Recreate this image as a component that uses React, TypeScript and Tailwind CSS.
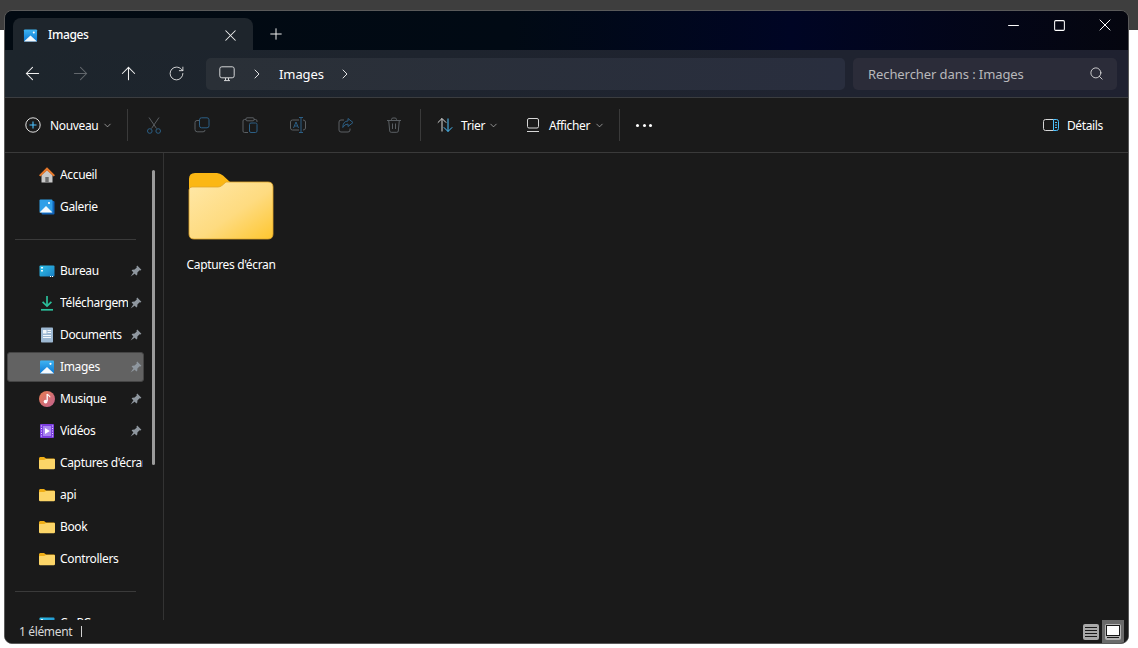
import {
  ArrowLeft,
  ArrowRight,
  ArrowUp,
  ChevronDown,
  ChevronRight,
  Minus,
  Plus,
  RotateCw,
  Search,
  Square,
  X,
} from "lucide-react";

function ImagesIcon({ size = 16 }: { size?: number }) {
  return (
    <svg width={size} height={size} viewBox="0 0 16 16">
      <defs>
        <linearGradient id="imgSky" x1="0" y1="0" x2="0" y2="1">
          <stop offset="0" stopColor="#3fb4f2" />
          <stop offset="1" stopColor="#0a78d4" />
        </linearGradient>
      </defs>
      <rect x="1" y="1.5" width="14" height="13" rx="1" fill="url(#imgSky)" />
      <path d="M1 14.5 L8 8 L15 14.5 Z" fill="#f4f9fd" />
      <circle cx="11.5" cy="4.8" r="1.1" fill="#fff" />
    </svg>
  );
}

function GalleryIcon() {
  return (
    <svg width="16" height="16" viewBox="0 0 16 16">
      <rect x="2.5" y="2" width="13" height="13.5" rx="1" fill="#0f62b8" />
      <rect x="0.5" y="0.5" width="13" height="13" rx="1" fill="#2f9fe8" />
      <path d="M0.5 13.5 L7 7 L13.5 13.5 Z" fill="#f4f9fd" />
      <circle cx="10" cy="4" r="1.1" fill="#fff" />
    </svg>
  );
}

function HomeIcon() {
  return (
    <svg width="16" height="16" viewBox="0 0 16 16">
      <path d="M2.5 8 L8 3 L13.5 8 V15.5 H2.5 Z" fill="#c9c9c9" />
      <rect x="6.3" y="10" width="3.4" height="5.5" fill="#6d6d6d" />
      <path d="M0 8.2 L8 0.3 L16 8.2 L14.6 9.6 L8 3.6 L1.4 9.6 Z" fill="#e8792b" />
    </svg>
  );
}

function DesktopIcon() {
  return (
    <svg width="16" height="16" viewBox="0 0 16 16">
      <defs>
        <linearGradient id="deskFill" x1="0" y1="0" x2="1" y2="1">
          <stop offset="0" stopColor="#2fc0e8" />
          <stop offset="1" stopColor="#1a7fc4" />
        </linearGradient>
      </defs>
      <rect x="0.5" y="2.5" width="15" height="11" rx="1" fill="url(#deskFill)" />
      <rect x="2" y="4" width="2" height="1.5" fill="#e9f8fd" />
      <rect x="2" y="7" width="2" height="1.5" fill="#e9f8fd" />
      <rect x="11" y="13" width="1" height="1" fill="#fff" />
      <rect x="13" y="13" width="1" height="1" fill="#fff" />
    </svg>
  );
}

function DownloadIcon() {
  return (
    <svg width="16" height="16" viewBox="0 0 16 16" fill="none" stroke="#2bbf9b" strokeWidth="1.7">
      <path d="M8 1 V10.5" />
      <path d="M3.6 6.8 L8 11 L12.4 6.8" />
      <path d="M2 14.8 H14" />
    </svg>
  );
}

function DocIcon() {
  return (
    <svg width="16" height="16" viewBox="0 0 16 16">
      <rect x="2" y="0.5" width="12" height="15" rx="0.8" fill="#9db8d2" />
      <rect x="4" y="3" width="3.5" height="3.5" fill="#f3f7fb" />
      <path d="M8.5 3.5 H12 M8.5 5.5 H12 M4 8.5 H12 M4 10.5 H12" stroke="#f3f7fb" strokeWidth="1" />
    </svg>
  );
}

function MusicIcon() {
  return (
    <svg width="16" height="16" viewBox="0 0 16 16">
      <defs>
        <linearGradient id="musicFill" x1="0" y1="0" x2="1" y2="1">
          <stop offset="0" stopColor="#ea7f52" />
          <stop offset="1" stopColor="#c0608e" />
        </linearGradient>
      </defs>
      <circle cx="8" cy="8" r="8" fill="url(#musicFill)" />
      <path d="M8.2 3 V10" stroke="#fff" strokeWidth="1.3" />
      <path d="M8.2 3 C9 4.5 10.8 4.5 11 6.2" stroke="#fff" strokeWidth="1.1" fill="none" />
      <circle cx="6.6" cy="10.6" r="1.9" fill="#fff" />
    </svg>
  );
}

function VideoIcon() {
  return (
    <svg width="16" height="16" viewBox="0 0 16 16">
      <rect x="1" y="1" width="14" height="14" rx="1" fill="#7d3fe0" />
      <rect x="4" y="3" width="8" height="10" fill="#a884f0" />
      <path d="M6 5 L10.8 8 L6 11 Z" fill="#fff" />
      <path d="M2 3 H3 M2 5.5 H3 M2 8 H3 M2 10.5 H3 M2 13 H3 M13 3 H14 M13 5.5 H14 M13 8 H14 M13 10.5 H14 M13 13 H14" stroke="#e6dcfb" strokeWidth="1" />
    </svg>
  );
}

function SmallFolder() {
  return (
    <svg width="16" height="16" viewBox="0 0 16 16">
      <path d="M0 3.5 Q0 2 1.2 2 H5 L7 3.6 H14.8 Q16 3.6 16 5 V8 H0 Z" fill="#f0ae15" />
      <path d="M0 5.6 Q0 5 0.8 5 H5.2 L7 3.9 H15 Q16 3.9 16 5 V13 Q16 14.2 14.8 14.2 H1.2 Q0 14.2 0 13 Z" fill="#fcd568" />
    </svg>
  );
}

function BigFolder() {
  return (
    <svg width="86" height="68" viewBox="0 0 86 68">
      <defs>
        <linearGradient id="bigFolderFill" x1="0" y1="0" x2="1" y2="1">
          <stop offset="0" stopColor="#ffe8a8" />
          <stop offset="0.55" stopColor="#fedb80" />
          <stop offset="1" stopColor="#fec62f" />
        </linearGradient>
      </defs>
      <path d="M1 7 Q1 1 7 1 H29 Q32 1 35 3.5 L42 10 H40 V24 H1 Z" fill="#fbb714" />
      <path d="M1 18 Q1 15 4 15 H30 Q32 15 34 13.5 L38 10 H80 Q85 10 85 15 V62 Q85 67 80 67 H6 Q1 67 1 62 Z" fill="url(#bigFolderFill)" stroke="#e0a52a" strokeWidth="0.8" />
    </svg>
  );
}

function PinIcon() {
  return (
    <svg width="12" height="12" viewBox="0 0 12 12" fill="#8f979f">
      <path d="M7.2 0.6 L11.4 4.8 L10.4 5.5 L9.6 5.2 L7.4 7.4 L7.3 9.6 L6.4 10.4 L1.6 5.6 L2.4 4.7 L4.6 4.6 L6.8 2.4 L6.5 1.6 Z" />
      <path d="M3.6 7 L0.6 11.4 L5 8.4 Z" />
    </svg>
  );
}

function NewIcon() {
  return (
    <svg width="16" height="16" viewBox="0 0 16 16" fill="none">
      <circle cx="8" cy="8" r="7.2" stroke="#e0e0e0" strokeWidth="1" />
      <path d="M8 4.5 V11.5 M4.5 8 H11.5" stroke="#4cc2ff" strokeWidth="1.1" />
    </svg>
  );
}

function CutIcon() {
  return (
    <svg width="16" height="17" viewBox="0 0 16 17" fill="none" strokeWidth="1">
      <path d="M3 0.5 L10.5 11.5 M13 0.5 L5.5 11.5" stroke="#5a5f63" />
      <circle cx="3.8" cy="14" r="2.3" stroke="#2c5f85" />
      <circle cx="12.2" cy="14" r="2.3" stroke="#2c5f85" />
    </svg>
  );
}

function CopyIcon() {
  return (
    <svg width="16" height="16" viewBox="0 0 16 16" fill="none" strokeWidth="1">
      <rect x="5.5" y="0.8" width="9.5" height="10" rx="2" stroke="#2c5f85" />
      <path d="M5 3.5 H3 Q1 3.5 1 5.5 V12.5 Q1 14.8 3.2 14.8 H9 Q11 14.8 11 13" stroke="#5a5f63" />
    </svg>
  );
}

function PasteIcon() {
  return (
    <svg width="16" height="16" viewBox="0 0 16 16" fill="none" strokeWidth="1">
      <path d="M4 2.5 H2.5 Q1 2.5 1 4 V14 Q1 15.5 2.5 15.5 H6 M12 2.5 H13.5 Q15 2.5 15 4 V5" stroke="#5a5f63" />
      <rect x="4" y="0.8" width="8" height="3" rx="1" stroke="#5a5f63" />
      <rect x="7.5" y="6" width="7.5" height="9.5" rx="1.5" stroke="#2c5f85" />
    </svg>
  );
}

function RenameIcon() {
  return (
    <svg width="16" height="16" viewBox="0 0 16 16" fill="none" strokeWidth="1">
      <path d="M9 3 H2.5 Q0.5 3 0.5 5 V11 Q0.5 13 2.5 13 H9 M13 3 Q15.5 3 15.5 5 V11 Q15.5 13 13 13" stroke="#5a5f63" />
      <path d="M3.5 11 L6 5 L8.5 11 M4.4 9 H7.6" stroke="#2c5f85" />
      <path d="M9 0.5 H13 M11 0.5 V15.5 M9 15.5 H13" stroke="#2c5f85" />
    </svg>
  );
}

function ShareIcon() {
  return (
    <svg width="16" height="16" viewBox="0 0 16 16" fill="none" strokeWidth="1">
      <path d="M6 3 H3 Q1 3 1 5 V13 Q1 15 3 15 H10 Q12 15 12 13 V11.5" stroke="#5a5f63" />
      <path d="M10 1.5 L15 5.5 L10 9.5 V7 Q6.5 7 4.8 10.5 Q5 4 10 4 Z" stroke="#2c5f85" />
    </svg>
  );
}

function TrashIcon() {
  return (
    <svg width="16" height="16" viewBox="0 0 16 16" fill="none" stroke="#5a5f63" strokeWidth="1">
      <path d="M1 3.5 H15 M5.5 3.5 V2.5 Q5.5 1 7 1 H9 Q10.5 1 10.5 2.5 V3.5" />
      <path d="M2.7 3.5 L3.7 14 Q3.8 15.3 5.2 15.3 H10.8 Q12.2 15.3 12.3 14 L13.3 3.5" />
      <path d="M6.5 6.5 V12 M9.5 6.5 V12" />
    </svg>
  );
}

function SortIcon() {
  return (
    <svg width="16" height="16" viewBox="0 0 16 16" fill="none" strokeWidth="1">
      <path d="M5 14.5 V1.5 M0.8 5.7 L5 1.5 L9.2 5.7" stroke="#d6d6d6" />
      <path d="M11 1.5 V14.5 M6.8 10.3 L11 14.5 L15.2 10.3" stroke="#4cc2ff" />
    </svg>
  );
}

function ViewIcon() {
  return (
    <svg width="16" height="16" viewBox="0 0 16 16" fill="none" stroke="#d6d6d6" strokeWidth="1">
      <rect x="2.5" y="1.5" width="11" height="9.5" rx="1.5" />
      <path d="M2 14.5 H14" />
    </svg>
  );
}

function DetailsIcon() {
  return (
    <svg width="16" height="16" viewBox="0 0 16 16" fill="none" strokeWidth="1">
      <path d="M10.5 2.5 H2.5 Q0.5 2.5 0.5 4.5 V11.5 Q0.5 13.5 2.5 13.5 H10.5" stroke="#d6d6d6" />
      <path d="M10.5 2.5 H13.5 Q15.5 2.5 15.5 4.5 V11.5 Q15.5 13.5 13.5 13.5 H10.5 Z" stroke="#4cc2ff" />
      <path d="M12 5.5 H14 M12 8 H14 M12 10.5 H14" stroke="#4cc2ff" />
    </svg>
  );
}

function MonitorIcon() {
  return (
    <svg width="16" height="16" viewBox="0 0 16 16" fill="none" stroke="#d4d6d8" strokeWidth="1">
      <rect x="0.8" y="0.8" width="14.4" height="11" rx="2" />
      <path d="M5 14.6 H11 M6.5 12 V14.5 M9.5 12 V14.5" />
    </svg>
  );
}

const topItems = [
  { label: "Accueil", icon: <HomeIcon /> },
  { label: "Galerie", icon: <GalleryIcon /> },
];

const pinned = [
  { label: "Bureau", icon: <DesktopIcon />, pin: true },
  { label: "Téléchargem", icon: <DownloadIcon />, pin: true },
  { label: "Documents", icon: <DocIcon />, pin: true },
  { label: "Images", icon: <ImagesIcon />, pin: true, active: true },
  { label: "Musique", icon: <MusicIcon />, pin: true },
  { label: "Vidéos", icon: <VideoIcon />, pin: true },
  { label: "Captures d'écran", icon: <SmallFolder /> },
  { label: "api", icon: <SmallFolder /> },
  { label: "Book", icon: <SmallFolder /> },
  { label: "Controllers", icon: <SmallFolder /> },
];

function SideRow({ label, icon, pin, active }: { label: string; icon: React.ReactNode; pin?: boolean; active?: boolean }) {
  return (
    <div className="flex h-[32px] items-center">
      <div
        className={`ml-[2px] flex h-[30px] w-[137px] items-center rounded-[3px] border pl-[31px] ${
          active ? "border-[#454545] bg-[#626262]" : "border-transparent"
        }`}
      >
        <span className="shrink-0">{icon}</span>
        <span className="ml-[5px] w-0 grow overflow-hidden whitespace-nowrap text-white">{label}</span>
        {pin && (
          <span className="mr-[1px] ml-[2px] shrink-0">
            <PinIcon />
          </span>
        )}
      </div>
    </div>
  );
}

function ToolSlot({ children }: { children: React.ReactNode }) {
  return <div className="flex w-12 justify-center">{children}</div>;
}

function Divider() {
  return <div className="h-[32px] w-px bg-[#3a3a3a]" />;
}

export default function App() {
  return (
    <div
      className="h-[648px] w-[1138px] overflow-hidden bg-[linear-gradient(#3e3e3e_30px,#ffffff_30px)] pt-[10px] pl-[4px] text-[12px] tracking-[-0.35px] text-white"
      style={{ fontFamily: '"Noto Sans", "Open Sans", sans-serif' }}
    >
      <div className="flex h-[634px] w-[1125px] flex-col overflow-hidden rounded-[8px] border border-[#5a5a5a] bg-[#1a1a1a]">
        {/* title bar */}
        <div className="flex h-[39px] shrink-0 bg-[linear-gradient(90deg,#020a12_0%,#010a14_45%,#000524_70%,#05060f_100%)]">
          <div className="mt-[7px] ml-[8px] flex h-[32px] w-[240px] items-center rounded-t-[8px] bg-[#1e252c] pt-[2px] pl-[10px]">
            <ImagesIcon size={15} />
            <span className="ml-[10px] w-[173px] font-medium">Images</span>
            <X size={19} strokeWidth={1.3} className="text-[#f0f0f0]" />
          </div>
          <div className="mt-[7px] ml-[14px] flex h-[32px] items-center">
            <Plus size={18} strokeWidth={1.3} className="text-[#f4f4f4]" />
          </div>
          <div className="ml-auto flex h-[28px]">
            <div className="flex w-[46px] items-center justify-center">
              <Minus size={17} strokeWidth={1.4} />
            </div>
            <div className="flex w-[46px] items-center justify-center">
              <Square size={13} strokeWidth={1.9} />
            </div>
            <div className="flex w-[46px] items-center justify-center">
              <X size={20} strokeWidth={1.2} />
            </div>
          </div>
        </div>

        {/* nav bar */}
        <div className="flex h-[48px] shrink-0 items-center border-b border-[#3b3d40] bg-[linear-gradient(90deg,#1d252c,#1f2330_75%,#1f2130)] pr-[10px] pl-[3px]">
          <ToolSlot>
            <ArrowLeft size={21} strokeWidth={1.2} className="text-[#f0f0f0]" />
          </ToolSlot>
          <ToolSlot>
            <ArrowRight size={21} strokeWidth={1.2} className="text-[#62676c]" />
          </ToolSlot>
          <ToolSlot>
            <ArrowUp size={21} strokeWidth={1.2} className="text-[#f0f0f0]" />
          </ToolSlot>
          <ToolSlot>
            <RotateCw size={17} strokeWidth={1.2} className="text-[#f0f0f0]" />
          </ToolSlot>
          <div className="ml-[6px] flex h-[32px] w-[639px] items-center rounded-[5px] bg-[linear-gradient(90deg,#2a3037,#292e3e)] pl-[13px] text-[13px] tracking-[-0.08px]">
            <MonitorIcon />
            <ChevronRight size={16} strokeWidth={1.4} className="ml-[14px] text-[#f0f0f0]" />
            <span className="ml-[14px] w-[45px] pt-[2px]">Images</span>
            <ChevronRight size={16} strokeWidth={1.4} className="ml-[13px] text-[#f0f0f0]" />
          </div>
          <div className="ml-[8px] flex h-[32px] w-[264px] items-center justify-between rounded-[5px] bg-[#2b2c39] pr-[13px] pl-[15px] text-[13px] tracking-[-0.08px] text-[#b8b8bb]">
            <span className="pt-[2px]">Rechercher dans : Images</span>
            <Search size={15} strokeWidth={1.4} className="text-[#e0e0e0]" />
          </div>
        </div>

        {/* command bar */}
        <div className="flex h-[55px] shrink-0 items-center border-b border-[#3a3a3a] bg-[#1a1a1a] pr-[25px] pl-[20px]">
          <NewIcon />
          <span className="ml-[9px] w-[48px] pt-[2px] whitespace-nowrap">Nouveau</span>
          <ChevronDown size={11} strokeWidth={1.4} className="ml-[4px] text-[#cfcfcf]" />
          <div className="ml-[14px]">
            <Divider />
          </div>
          <div className="ml-[2px] flex">
            <ToolSlot>
              <CutIcon />
            </ToolSlot>
            <ToolSlot>
              <CopyIcon />
            </ToolSlot>
            <ToolSlot>
              <PasteIcon />
            </ToolSlot>
            <ToolSlot>
              <RenameIcon />
            </ToolSlot>
            <ToolSlot>
              <ShareIcon />
            </ToolSlot>
            <ToolSlot>
              <TrashIcon />
            </ToolSlot>
          </div>
          <div className="ml-[2px]">
            <Divider />
          </div>
          <span className="ml-[16px]">
            <SortIcon />
          </span>
          <span className="ml-[8px] w-[23px] pt-[2px] whitespace-nowrap">Trier</span>
          <ChevronDown size={11} strokeWidth={1.4} className="ml-[4px] text-[#cfcfcf]" />
          <span className="ml-[26px]">
            <ViewIcon />
          </span>
          <span className="ml-[8px] w-[42px] pt-[2px] whitespace-nowrap">Afficher</span>
          <ChevronDown size={11} strokeWidth={1.4} className="ml-[3px] text-[#cfcfcf]" />
          <div className="ml-[14px]">
            <Divider />
          </div>
          <div className="ml-[16px] flex w-[16px] justify-between">
            <span className="h-[3px] w-[3px] rounded-full bg-white" />
            <span className="h-[3px] w-[3px] rounded-full bg-white" />
            <span className="h-[3px] w-[3px] rounded-full bg-white" />
          </div>
          <div className="ml-auto flex items-center">
            <DetailsIcon />
            <span className="ml-[8px] pt-[2px] whitespace-nowrap">Détails</span>
          </div>
        </div>

        {/* body */}
        <div className="flex min-h-0 grow">
          <div className="relative w-[159px] shrink-0 overflow-hidden border-r border-[#333333] pt-[6px]">
            <div className="absolute top-[17px] left-[147px] h-[295px] w-[3px] rounded-full bg-[#9b9b9b]" />
            {topItems.map((item) => (
              <SideRow key={item.label} label={item.label} icon={item.icon} />
            ))}
            <div className="mt-[16px] mb-[15px] ml-[10px] h-px w-[121px] bg-[#3a3a3a]" />
            {pinned.map((item) => (
              <SideRow key={item.label} {...item} />
            ))}
            <div className="mt-[16px] mb-[15px] ml-[10px] h-px w-[121px] bg-[#3a3a3a]" />
            <SideRow label="Ce PC" icon={<DesktopIcon />} />
          </div>
          <div className="grow pt-[19px] pl-[22px]">
            <div className="flex w-[90px] flex-col items-center">
              <BigFolder />
              <span className="mt-[16px] whitespace-nowrap">Captures d'écran</span>
            </div>
          </div>
        </div>

        {/* status bar */}
        <div className="relative flex h-[23px] shrink-0 items-center bg-[#1a1a1a] pl-[14px] text-[#d8d8d8]">
          <span>1 élément</span>
          <span className="ml-[9px] h-[11px] w-px bg-[#d0d0d0]" />
          <div className="ml-auto flex items-center pr-[4px]">
            <div className="flex h-[16px] w-[16px] flex-col justify-center gap-[2px] rounded-[2px] bg-[#a8a8a8] px-[2px]">
              <span className="h-px bg-[#1a1a1a]" />
              <span className="h-px bg-[#1a1a1a]" />
              <span className="h-px bg-[#1a1a1a]" />
              <span className="h-px bg-[#1a1a1a]" />
            </div>
            <div className="ml-[3px] flex h-[23px] w-[22px] items-center justify-center bg-[#6a6a6a]">
              <div className="flex h-[16px] w-[16px] flex-col items-center rounded-[2px] bg-[#b4b4b4] px-[2px] pt-[2px]">
                <span className="h-[9px] w-[12px] bg-white outline outline-1 outline-[#1a1a1a]" />
                <span className="mt-[2px] h-px w-[12px] bg-[#1a1a1a]" />
              </div>
            </div>
          </div>
        </div>
      </div>
    </div>
  );
}
